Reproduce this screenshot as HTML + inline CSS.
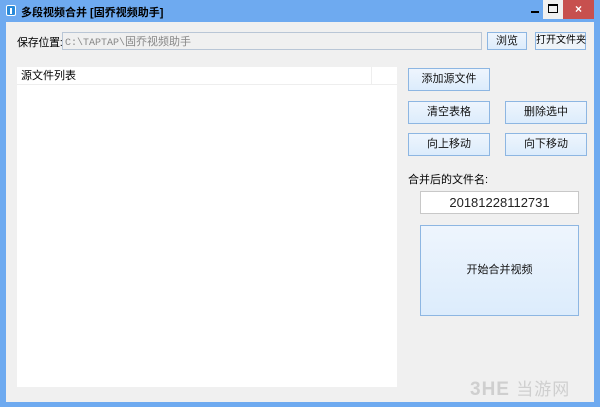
<!DOCTYPE html>
<html><head><meta charset="utf-8"><style>
*{margin:0;padding:0;box-sizing:border-box}
body{width:600px;height:407px;background:#6eaaf0;position:relative;overflow:hidden;font-family:"Liberation Sans","Noto Sans CJK SC","WenQuanYi Zen Hei",sans-serif;font-size:11px;color:#000;white-space:nowrap}
.a{position:absolute}
.client{left:6px;top:22px;width:588px;height:380px;background:#f0f0f0}
.btn{position:absolute;background:linear-gradient(#eef5fd,#dcecfc);border:1px solid #8db6e2;text-align:center;font-size:11px;color:#111}
.title{left:21px;top:4px;font-size:11px;font-weight:bold;color:#000}
</style></head><body>
<div class="a" style="left:6px;top:5px;width:10px;height:11px;background:#2a8ad8;border-radius:2px;border:1px solid #fff"></div>
<div class="a" style="left:10px;top:8px;width:2px;height:6px;background:#fff"></div>
<div class="a title">多段视频合并 [固乔视频助手]</div>
<div class="a" style="left:531px;top:11px;width:8px;height:2px;background:#000"></div>
<div class="a" style="left:543px;top:0;width:20px;height:19px;background:#f0f0f0"></div>
<div class="a" style="left:548px;top:4px;width:10px;height:9px;border:1px solid #000;border-top-width:2px"></div>
<div class="a" style="left:563px;top:0;width:31px;height:19px;background:#c7504e;color:#fff;text-align:center;font-size:12px;line-height:18px;font-weight:bold">×</div>
<div class="a client"></div>
<div class="a" style="left:17px;top:34px;letter-spacing:-0.3px">保存位置:</div>
<div class="a" style="left:62px;top:32px;width:420px;height:18px;background:#f0f0f0;border:1px solid #b9c6d6;color:#888;font-size:10px;line-height:16px;padding-left:2px;font-family:'Liberation Mono','Noto Sans CJK SC',monospace">C:\TAPTAP\<span style="font-family:'Noto Sans CJK SC',sans-serif;font-size:11px">固乔视频助手</span></div>
<div class="btn" style="left:487px;top:32px;width:40px;height:18px;line-height:16px">浏览</div>
<div class="btn" style="left:535px;top:32px;width:51px;height:18px;line-height:16px;background:#eef3f8;font-size:10px;color:#000">打开文件夹</div>
<div class="a" style="left:17px;top:67px;width:380px;height:320px;background:#fff"></div>
<div class="a" style="left:17px;top:67px;width:380px;height:18px;border-bottom:1px solid #eee;line-height:18px;padding-left:4px">源文件列表</div>
<div class="a" style="left:371px;top:67px;width:1px;height:18px;background:#eee"></div>
<div class="btn" style="left:408px;top:68px;width:82px;height:23px;line-height:21px">添加源文件</div>
<div class="btn" style="left:408px;top:101px;width:82px;height:23px;line-height:21px">清空表格</div>
<div class="btn" style="left:505px;top:101px;width:82px;height:23px;line-height:21px">删除选中</div>
<div class="btn" style="left:408px;top:133px;width:82px;height:23px;line-height:21px">向上移动</div>
<div class="btn" style="left:505px;top:133px;width:82px;height:23px;line-height:21px">向下移动</div>
<div class="a" style="left:408px;top:171px">合并后的文件名:</div>
<div class="a" style="left:420px;top:191px;width:159px;height:23px;background:#fff;border:1px solid #c8c8c8;text-align:center;line-height:21px;font-size:13px;color:#222">20181228112731</div>
<div class="btn" style="left:420px;top:225px;width:159px;height:91px;line-height:89px;background:linear-gradient(#eef5fd,#dcecfc)">开始合并视频</div>
<div class="a" style="left:470px;top:375px;font-size:19px;font-weight:bold;color:#cfcfcf;letter-spacing:1px">3HE <span style="font-weight:normal;font-size:17px;font-family:'Noto Sans CJK SC',sans-serif">当游网</span></div>
</body></html>
